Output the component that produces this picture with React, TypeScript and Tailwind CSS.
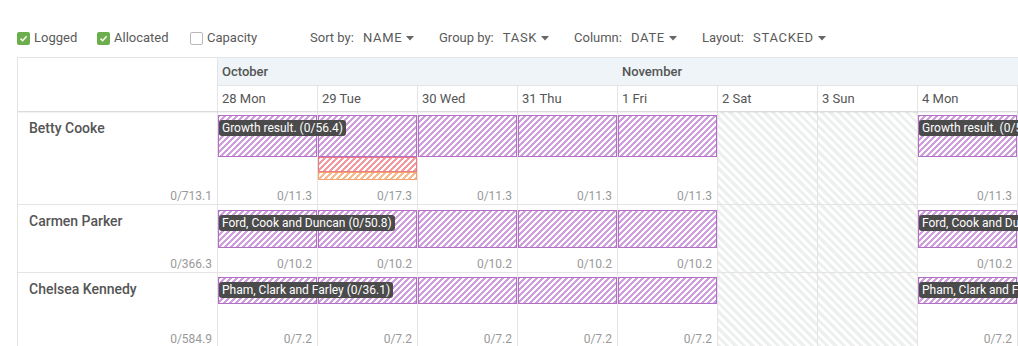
import React from "react";

type Kind = "purple" | "pink" | "orange";
type Bar = { h: number; kind: Kind; label?: string };
type Cell = { bars: Bar[]; total?: string };
type Row = { name: string; total: string; height: string; pt: string; cells: Cell[] };

const days = [
  { label: "28 Mon", weekend: false },
  { label: "29 Tue", weekend: false },
  { label: "30 Wed", weekend: false },
  { label: "31 Thu", weekend: false },
  { label: "1 Fri", weekend: false },
  { label: "2 Sat", weekend: true },
  { label: "3 Sun", weekend: true },
  { label: "4 Mon", weekend: false },
  { label: "5 Tue", weekend: false },
];

const barStyle: Record<Kind, string> = {
  purple:
    "border-[#b36fc6] bg-[length:6px_6px] bg-[linear-gradient(135deg,#d09edf_0%,#d09edf_9%,#ffffff_9%,#ffffff_41%,#d09edf_41%,#d09edf_59%,#ffffff_59%,#ffffff_91%,#d09edf_91%)]",
  pink:
    "border-[#ee7c84] bg-[length:6px_6px] bg-[linear-gradient(135deg,#f39aa0_0%,#f39aa0_9%,#ffffff_9%,#ffffff_41%,#f39aa0_41%,#f39aa0_59%,#ffffff_59%,#ffffff_91%,#f39aa0_91%)]",
  orange:
    "border-[#f4a470] bg-[length:6px_6px] bg-[linear-gradient(135deg,#f7b88d_0%,#f7b88d_9%,#ffffff_9%,#ffffff_41%,#f7b88d_41%,#f7b88d_59%,#ffffff_59%,#ffffff_91%,#f7b88d_91%)]",
};

function mk(h: number, label: string, total: string): Cell[] {
  return days.map((d, i) =>
    d.weekend
      ? { bars: [] }
      : { bars: [{ h, kind: "purple" as Kind, label: i === 0 || i === 7 ? label : undefined }], total }
  );
}

const bettyCells = mk(42, "Growth result. (0/56.4)", "0/11.3");
bettyCells[1] = {
  bars: [
    { h: 42, kind: "purple" },
    { h: 15, kind: "pink" },
    { h: 8, kind: "orange" },
  ],
  total: "0/17.3",
};

const rows: Row[] = [
  { name: "Betty Cooke", total: "0/713.1", height: "h-[93px]", pt: "pt-[3px]", cells: bettyCells },
  {
    name: "Carmen Parker",
    total: "0/366.3",
    height: "h-[68px]",
    pt: "pt-[5px]",
    cells: mk(38, "Ford, Cook and Duncan (0/50.8)", "0/10.2"),
  },
  {
    name: "Chelsea Kennedy",
    total: "0/584.9",
    height: "h-[75px]",
    pt: "pt-[4px]",
    cells: mk(27, "Pham, Clark and Farley (0/36.1)", "0/7.2"),
  },
];

function Check({ on }: { on: boolean }) {
  if (!on)
    return <span className="inline-block w-[13px] h-[13px] rounded-[2px] border border-[#b9b9b9] bg-white" />;
  return (
    <span className="inline-flex items-center justify-center w-[13px] h-[13px] rounded-[2px] bg-[#6cae4c]">
      <svg width="9" height="9" viewBox="0 0 9 9">
        <path d="M1.5 4.6 L3.6 6.7 L7.6 2.2" fill="none" stroke="#fff" strokeWidth="1.5" />
      </svg>
    </span>
  );
}

function Caret() {
  return (
    <svg width="8" height="5" viewBox="0 0 8 5" className="ml-[4px] mt-[1px]">
      <path d="M0 0 L8 0 L4 4.5 Z" fill="#666" />
    </svg>
  );
}

function Select({ label, value, w }: { label: string; value: string; w: string }) {
  return (
    <div className={`flex items-center ${w} shrink-0`}>
      <span>{label}</span>
      <span className="ml-[9px] tracking-[0.7px]">{value}</span>
      <Caret />
    </div>
  );
}

export default function App() {
  return (
    <div
      className="w-[1018px] h-[346px] overflow-hidden bg-white text-[#555]"
      style={{ fontFamily: 'Roboto, "Liberation Sans", Arial, sans-serif' }}
    >
      {/* toolbar */}
      <div className="h-[57px] pt-[19px] pl-[17px] flex items-center text-[13px] text-[#5a5a5a]">
        <div className="flex items-center w-[80px] shrink-0">
          <Check on />
          <span className="ml-[4px]">Logged</span>
        </div>
        <div className="flex items-center w-[93px] shrink-0">
          <Check on />
          <span className="ml-[4px]">Allocated</span>
        </div>
        <div className="flex items-center w-[120px] shrink-0">
          <Check on={false} />
          <span className="ml-[4px]">Capacity</span>
        </div>
        <Select label="Sort by:" value="NAME" w="w-[129px]" />
        <Select label="Group by:" value="TASK" w="w-[135px]" />
        <Select label="Column:" value="DATE" w="w-[128px]" />
        <Select label="Layout:" value="STACKED" w="w-[140px]" />
      </div>

      {/* table */}
      <div className="ml-[17px] w-[1001px] border-l border-t border-[#e4e4e4] overflow-hidden">
        {/* header */}
        <div className="flex border-b border-[#dcdcdc] shadow-[0_1px_1px_rgba(0,0,0,0.05)] relative z-10">
          <div className="w-[200px] shrink-0 bg-white border-r border-[#e4e4e4]" />
          <div className="flex flex-col">
            <div className="flex h-[28px] bg-[#eef4f7] border-b border-[#e4e4e4] text-[13px] font-medium text-[#555]">
              <div className="w-[400px] shrink-0 pl-[4px] flex items-center">October</div>
              <div className="w-[600px] shrink-0 pl-[4px] flex items-center">November</div>
            </div>
            <div className="flex h-[25px] text-[13px] text-[#555]">
              {days.map((d) => (
                <div
                  key={d.label}
                  className="w-[100px] shrink-0 border-r border-[#e4e4e4] pl-[4px] flex items-center"
                >
                  {d.label}
                </div>
              ))}
            </div>
          </div>
        </div>

        {/* body */}
        {rows.map((r) => (
          <div key={r.name} className={`flex border-b border-[#e4e4e4] ${r.height}`}>
            <div className="w-[200px] shrink-0 border-r border-[#e4e4e4] flex flex-col justify-between pl-[11px] pr-[5px] pt-[6px]">
              <div className="text-[14px] leading-[20px] font-medium text-[#555]">{r.name}</div>
              <div className="text-right text-[12px] leading-[16px] text-[#999]">{r.total}</div>
            </div>
            {r.cells.map((c, i) => (
              <div
                key={i}
                className={`w-[100px] shrink-0 border-r border-[#e4e4e4] flex flex-col justify-between ${r.pt} ${
                  days[i].weekend
                    ? "bg-[repeating-linear-gradient(45deg,#eef0f0_0px,#eef0f0_3px,#ffffff_3px,#ffffff_6px)]"
                    : ""
                }`}
              >
                <div className="flex flex-col">
                  {c.bars.map((b, j) => (
                    <div
                      key={j}
                      className={`relative w-[99px] border ${barStyle[b.kind]}`}
                      style={{ height: b.h }}
                    >
                      {b.label && (
                        <div className="absolute left-0 top-[4px] z-20 whitespace-nowrap rounded-[3px] bg-[#4b4b4b] px-[3px] h-[16px] leading-[16px] text-[12px] text-white">
                          {b.label}
                        </div>
                      )}
                    </div>
                  ))}
                </div>
                {c.total && (
                  <div className="text-right pr-[5px] text-[12px] leading-[16px] text-[#999]">{c.total}</div>
                )}
              </div>
            ))}
          </div>
        ))}
      </div>
    </div>
  );
}
